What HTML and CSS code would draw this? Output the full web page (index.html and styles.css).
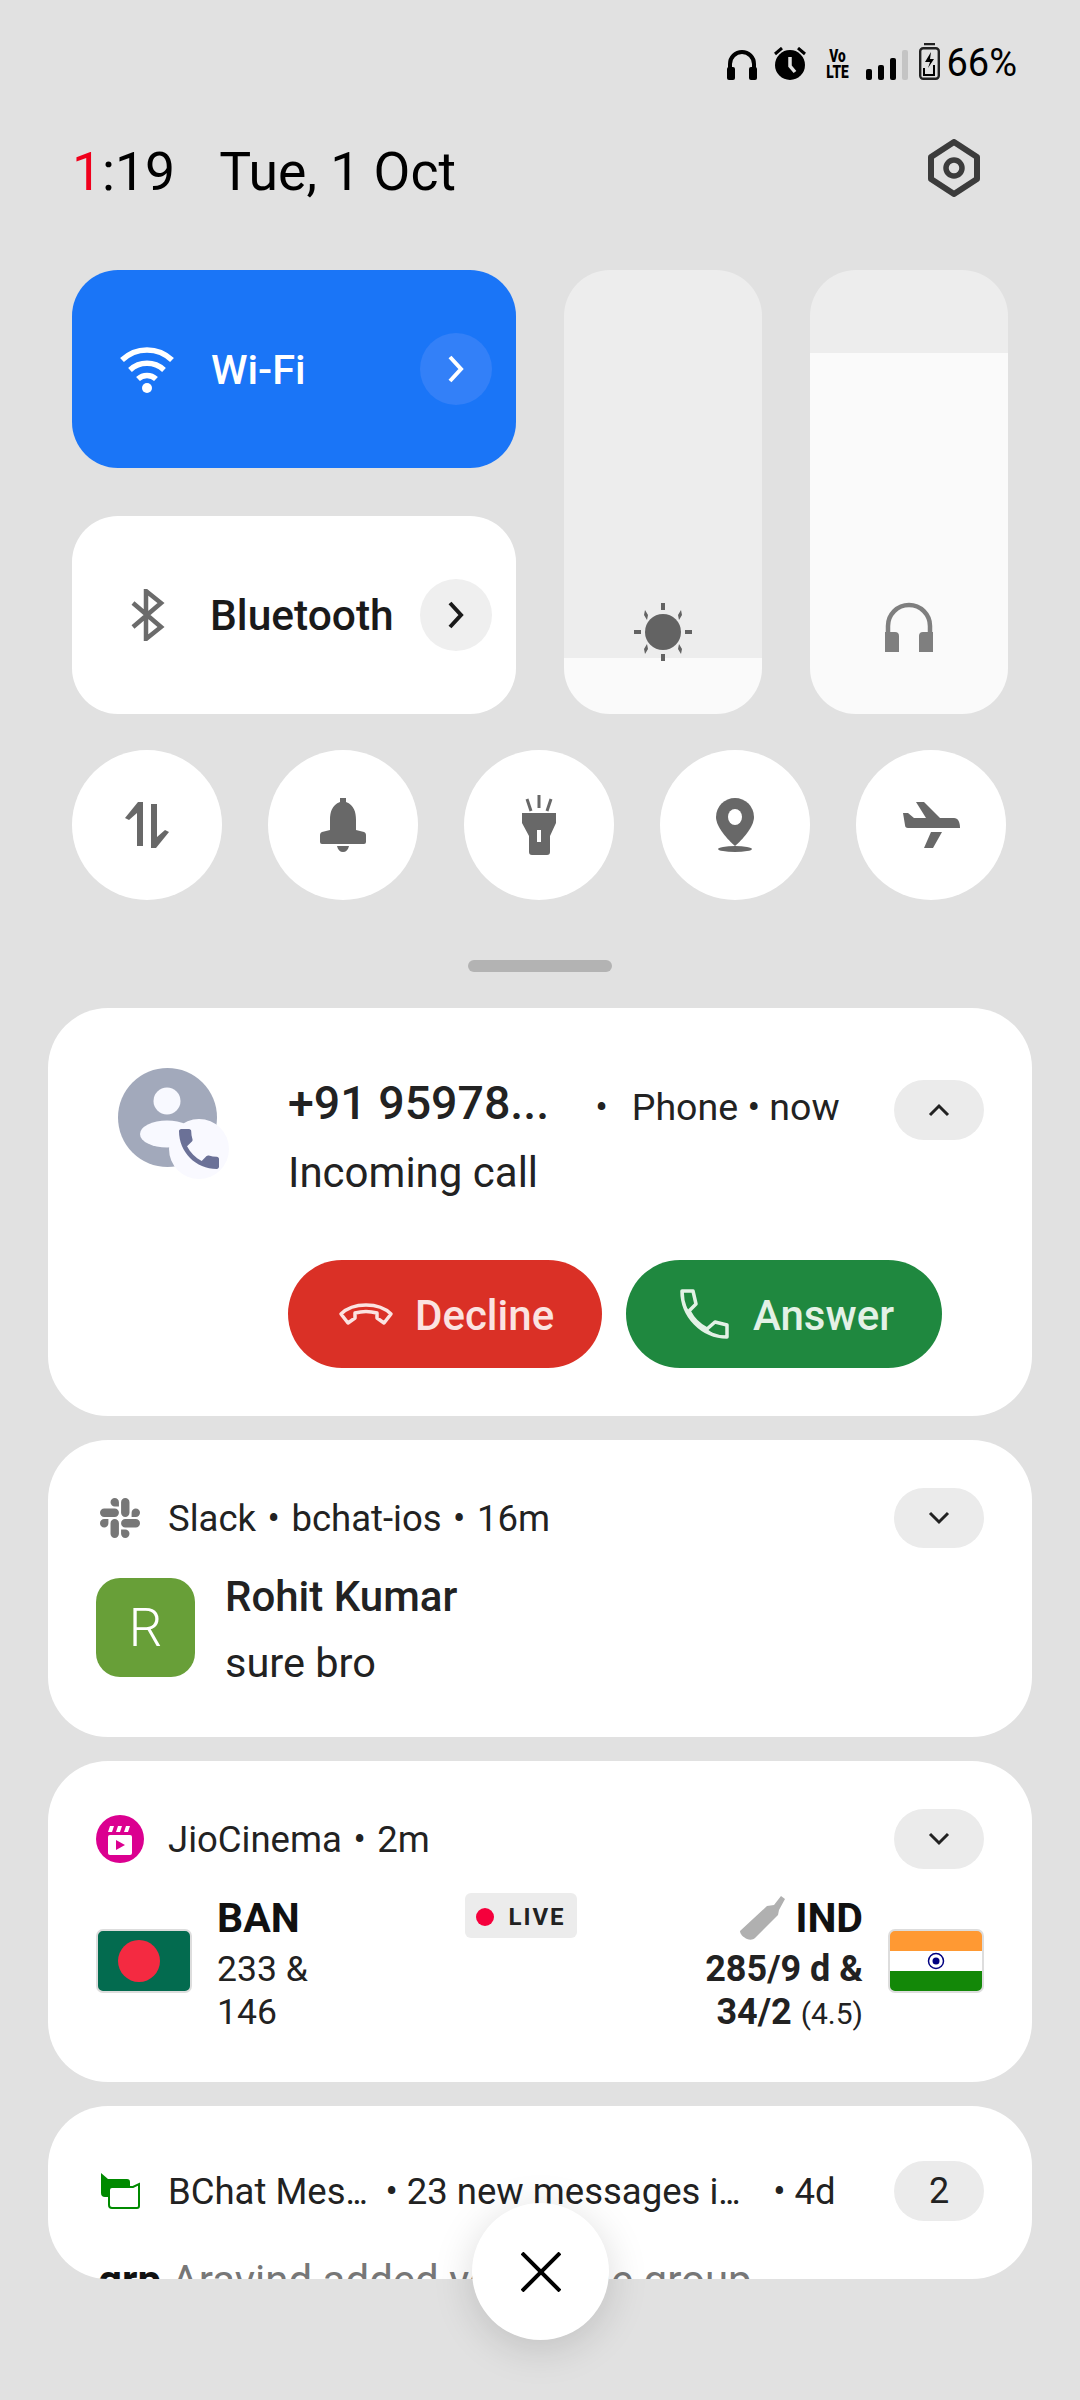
FILE: index.html
```html
<!DOCTYPE html>
<html lang="en">
<head>
    <meta charset="UTF-8">
    <meta name="viewport" content="width=device-width, initial-scale=1.0">
    <title>Notification shade</title>
    <link rel="stylesheet" href="styles.css">
</head>
<body>
    <header class="status">
        <svg width="30" height="30" viewBox="0 0 30 30"><path d="M3 27V14a12 12 0 0 1 24 0v13" fill="none" stroke="#000" stroke-width="4"/><rect x="0" y="17" width="8" height="13" rx="2"/><rect x="22" y="17" width="8" height="13" rx="2"/></svg>
        <svg class="status-alarm" width="32" height="33" viewBox="0 0 32 33"><circle cx="16" cy="18" r="15"/><path d="M16 10v9l5 6" fill="none" stroke="#e1e1e1" stroke-width="3.5"/><path d="M1 7l7-6M31 7l-7-6" stroke="#000" stroke-width="3"/></svg>
        <div class="volte"><span>Vo</span><span>LTE</span></div>
        <div class="signal"><i class="bar-1"></i><i class="bar-2"></i><i class="bar-3"></i><i class="bar-4"></i></div>
        <svg class="status-battery" width="21" height="37" viewBox="0 0 21 37"><path d="M5 1h11" stroke="#222" stroke-width="2.5"/><rect x="1.2" y="5.2" width="18.6" height="30.6" rx="3" fill="none" stroke="#222" stroke-width="2.4"/><path d="M12 9l-6 10h5l-2 6 6-9h-4z"/><path d="M5 25v7h10V22" fill="none" stroke="#000" stroke-width="2"/></svg>
        <span class="battery-text">66%</span>
    </header>

    <div class="clock-row">
        <div class="clock"><span class="clock-red">1</span>:19<span class="clock-date">Tue, 1 Oct</span></div>
        <svg width="52" height="58" viewBox="0 0 52 58"><path d="M26 3L49 18V40L26 55L3 40V18Z" fill="none" stroke="#3c3c3c" stroke-width="6" stroke-linejoin="round"/><circle cx="26" cy="29" r="8" fill="none" stroke="#3c3c3c" stroke-width="5.5"/></svg>
    </div>

    <section class="tiles">
        <div class="tile tile-wifi">
            <svg class="tile-icon" width="56" height="48" viewBox="0 0 56 48"><path d="M3 15a36 36 0 0 1 50 0" fill="none" stroke="#fff" stroke-width="5.5"/><path d="M11 25a25 25 0 0 1 34 0" fill="none" stroke="#fff" stroke-width="5.5"/><path d="M19 34a13 13 0 0 1 18 0" fill="none" stroke="#fff" stroke-width="5.5"/><circle cx="28" cy="43" r="5" fill="#fff"/></svg>
            <span class="tile-label">Wi-Fi</span>
            <span class="tile-more more-blue"><svg width="18" height="28" viewBox="0 0 18 28"><path d="M3 2l11 12L3 26" fill="none" stroke="#fff" stroke-width="4"/></svg></span>
        </div>
        <div class="slider slider-bright">
            <svg class="slider-icon icon-sun" width="58" height="58" viewBox="0 0 58 58"><circle cx="29" cy="29" r="18" fill="#636363"/><path d="M29 0v7M29 51v7M0 29h7M51 29h7" stroke="#636363" stroke-width="4"/><path d="M11 7l3 5-1 5-3-5zM47 7l-3 5 1 5 3-5zM11 51l3-5-1-5-3 5zM47 51l-3-5 1-5 3 5z" fill="#636363"/></svg>
        </div>
        <div class="slider slider-sound">
            <svg class="slider-icon icon-phones" width="48" height="50" viewBox="0 0 48 50"><path d="M3 38V24a21 21 0 0 1 42 0v14" fill="none" stroke="#7f7f7f" stroke-width="4.5"/><path d="M0 50V30h10a4 4 0 0 1 4 4v16zM48 50V30H38a4 4 0 0 0-4 4v16z" fill="#7f7f7f"/></svg>
        </div>
        <div class="tile tile-bt">
            <svg class="tile-icon" width="36" height="52" viewBox="0 0 36 52"><path d="M3 14l28 24L16 50V2l15 12L3 38" fill="none" stroke="#6b6b6b" stroke-width="4.5"/></svg>
            <span class="tile-label label-dark">Bluetooth</span>
            <span class="tile-more more-grey"><svg width="18" height="28" viewBox="0 0 18 28"><path d="M3 2l11 12L3 26" fill="none" stroke="#1a1a1a" stroke-width="4"/></svg></span>
        </div>
    </section>

    <section class="rounds">
        <div class="round"><svg width="44" height="46" viewBox="0 0 44 46"><path d="M0 16L13 0h5v44h-6V11L4 18zM44 30L31 46h-5V2h6v33l8-7z" fill="#686868"/></svg></div>
        <div class="round"><svg width="46" height="54" viewBox="0 0 46 54"><path d="M20 0h6v4c8 3 10 10 10 18v10l8 2c2 1 2 2 2 4v6a2 2 0 0 1-2 2H2a2 2 0 0 1-2-2v-6c0-2 0-3 2-4l8-2V22c0-8 2-15 10-18z" fill="#686868"/><path d="M17 48h12c-1 4-3 6-6 6s-5-2-6-6z" fill="#686868"/></svg></div>
        <div class="round"><svg width="34" height="60" viewBox="0 0 34 60"><path d="M5 4l4 12M17 0v13M29 4l-4 12" stroke="#686868" stroke-width="3"/><path d="M0 18h34v10l-6 13v16a3 3 0 0 1-3 3H10a3 3 0 0 1-3-3V41L0 28z" fill="#686868"/><rect x="15" y="35" width="4" height="12" fill="#fff"/></svg></div>
        <div class="round"><svg width="40" height="54" viewBox="0 0 40 54"><path d="M20 0a19 19 0 0 1 19 19c0 10-12 23-19 29C13 42 1 29 1 19A19 19 0 0 1 20 0z" fill="#686868"/><ellipse cx="20" cy="19" rx="7" ry="8" fill="#fff"/><ellipse cx="20" cy="51" rx="17" ry="3" fill="#686868"/></svg></div>
        <div class="round"><svg width="58" height="46" viewBox="0 0 58 46"><path d="M14 0h8l16 16h14c4 0 6 4 6 10H6c-2 0-3-1-3-3L1 11h5l6 5h12z" fill="#686868"/><path d="M29 30h11l-9 16h-9z" fill="#686868"/></svg></div>
    </section>

    <div class="handle"></div>

    <main class="cards">
        <article class="card card-call">
            <div class="call-row">
                <div class="avatar-call">
                    <svg width="99" height="99" viewBox="0 0 99 99"><circle cx="49.5" cy="49.5" r="49.5" fill="#a2a9bb"/><circle cx="49" cy="33" r="13.5" fill="#f8f9ff"/><ellipse cx="49" cy="66" rx="27" ry="13.5" fill="#f8f9ff"/></svg>
                    <span class="call-badge"><svg width="40" height="40" viewBox="3 3 18 18"><path fill="#6b7197" d="M6.62 10.79c1.44 2.83 3.76 5.14 6.59 6.59l2.2-2.2c.27-.27.67-.36 1.02-.24 1.12.37 2.33.57 3.57.57.55 0 1 .45 1 1V20c0 .55-.45 1-1 1-9.39 0-17-7.61-17-17 0-.55.45-1 1-1h3.5c.55 0 1 .45 1 1 0 1.25.2 2.45.57 3.57.11.35.03.74-.25 1.02l-2.2 2.2z"/></svg></span>
                </div>
                <div class="call-body">
                    <div class="call-top">
                        <span class="call-number">+91 95978...</span>
                        <span class="call-dot">•</span>
                        <span class="call-meta">Phone • now</span>
                        <span class="pill"><svg width="22" height="14" viewBox="0 0 22 14"><path d="M2 12l9-9 9 9" fill="none" stroke="#222" stroke-width="3"/></svg></span>
                    </div>
                    <div class="call-sub">Incoming call</div>
                </div>
            </div>
            <div class="call-actions">
                <div class="btn btn-decline">
                    <svg width="56" height="24" viewBox="0 0 56 24"><path d="M10 21L3 12C15 0 41 0 53 12l-7 9-7-5v-5c-7-2-15-2-22 0v5z" fill="none" stroke="#fbe3e1" stroke-width="3.5" stroke-linejoin="round"/></svg>
                    <span>Decline</span>
                </div>
                <div class="btn btn-answer">
                    <svg width="52" height="52" viewBox="0 0 52 52"><path d="M4 3h11l3 13-7 7c4 8 10 14 18 18l8-7 12 3v12C24 49 4 28 4 3z" fill="none" stroke="#e3f1e6" stroke-width="3.5" stroke-linejoin="round"/><path d="M6 15c3 15 14 26 30 31L29 41c-8-4-14-10-18-18z" fill="#e3f1e6"/></svg>
                    <span>Answer</span>
                </div>
            </div>
        </article>

        <article class="card card-slack">
            <div class="card-head">
                <span class="app-icon"><svg width="40" height="40" viewBox="0 0 24 24"><path fill="#777" d="M5.042 15.165a2.528 2.528 0 0 1-2.52 2.523A2.528 2.528 0 0 1 0 15.165a2.527 2.527 0 0 1 2.522-2.52h2.52v2.52zM6.313 15.165a2.527 2.527 0 0 1 2.521-2.52 2.527 2.527 0 0 1 2.521 2.52v6.313A2.528 2.528 0 0 1 8.834 24a2.528 2.528 0 0 1-2.521-2.522v-6.313zM8.834 5.042a2.528 2.528 0 0 1-2.521-2.52A2.528 2.528 0 0 1 8.834 0a2.528 2.528 0 0 1 2.521 2.522v2.52H8.834zM8.834 6.313a2.528 2.528 0 0 1 2.521 2.521 2.528 2.528 0 0 1-2.521 2.521H2.522A2.528 2.528 0 0 1 0 8.834a2.528 2.528 0 0 1 2.522-2.521h6.312zM18.956 8.834a2.528 2.528 0 0 1 2.522-2.521A2.528 2.528 0 0 1 24 8.834a2.528 2.528 0 0 1-2.522 2.521h-2.522V8.834zM17.688 8.834a2.528 2.528 0 0 1-2.523 2.521 2.527 2.527 0 0 1-2.52-2.521V2.522A2.527 2.527 0 0 1 15.165 0a2.528 2.528 0 0 1 2.523 2.522v6.312zM15.165 18.956a2.528 2.528 0 0 1 2.523 2.522A2.528 2.528 0 0 1 15.165 24a2.527 2.527 0 0 1-2.52-2.522v-2.522h2.52zM15.165 17.688a2.527 2.527 0 0 1-2.52-2.523 2.526 2.526 0 0 1 2.52-2.52h6.313A2.527 2.527 0 0 1 24 15.165a2.528 2.528 0 0 1-2.522 2.523h-6.313z"/></svg></span>
                <span class="head-text">Slack • bchat-ios • 16m</span>
                <span class="pill"><svg width="22" height="14" viewBox="0 0 22 14"><path d="M2 2l9 9 9-9" fill="none" stroke="#222" stroke-width="3"/></svg></span>
            </div>
            <div class="msg-row">
                <div class="msg-avatar">R</div>
                <div class="msg-body">
                    <div class="msg-name">Rohit Kumar</div>
                    <div class="msg-text">sure bro</div>
                </div>
            </div>
        </article>

        <article class="card card-score">
            <div class="card-head">
                <span class="app-icon"><svg width="48" height="48" viewBox="0 0 48 48"><circle cx="24" cy="24" r="24" fill="#db0090"/><rect x="12" y="20" width="24" height="20" rx="2" fill="#fff"/><path d="M12 17l2-6h4l-2 6zM20 17l2-6h4l-2 6zM28 17l2-6h4l-2 6z" fill="#fff"/><path d="M20 25l9 5-9 5z" fill="#db0090"/></svg></span>
                <span class="head-text">JioCinema • 2m</span>
                <span class="pill"><svg width="22" height="14" viewBox="0 0 22 14"><path d="M2 2l9 9 9-9" fill="none" stroke="#222" stroke-width="3"/></svg></span>
            </div>
            <div class="score-grid">
                <div class="team">
                    <svg class="flag" width="96" height="64" viewBox="0 0 96 64"><rect x="1" y="1" width="94" height="62" rx="6" fill="#036b4f" stroke="#ddd" stroke-width="2"/><circle cx="43" cy="32" r="21" fill="#f42a41"/></svg>
                    <div>
                        <div class="team-name">BAN</div>
                        <div class="team-score">233 &amp;<br>146</div>
                    </div>
                </div>
                <div class="live"><i class="live-dot"></i>LIVE</div>
                <div class="team team-right">
                    <div>
                        <div class="team-name">
                            <svg class="bat" width="46" height="44" viewBox="0 0 46 44"><path d="M42 0l4 3-6 11-1 5-23 23c-2 2-5 2-8 1-4-2-7-5-7-8L28 10l7-1z" fill="#b0b0b0"/></svg>
                            IND
                        </div>
                        <div class="team-score score-strong">285/9 d &amp;<br>34/2 <small>(4.5)</small></div>
                    </div>
                    <svg class="flag" width="96" height="64" viewBox="0 0 96 64"><clipPath id="ind-clip"><rect x="1" y="1" width="94" height="62" rx="6"/></clipPath><g clip-path="url(#ind-clip)"><rect width="96" height="22" fill="#ff9933"/><rect y="22" width="96" height="20" fill="#fff"/><rect y="42" width="96" height="22" fill="#138808"/></g><rect x="1" y="1" width="94" height="62" rx="6" fill="none" stroke="#ddd" stroke-width="2"/><circle cx="48" cy="32" r="7.5" fill="none" stroke="#000080" stroke-width="1.5"/><circle cx="48" cy="32" r="3.5" fill="#000080"/></svg>
                </div>
            </div>
        </article>

        <article class="card card-chat">
            <div class="card-head">
                <span class="app-icon"><svg width="40" height="36" viewBox="0 0 40 36"><path d="M1 0l7 6h19a3 3 0 0 1 3 3v15H5a4 4 0 0 1-4-4z" fill="#008a00"/><path d="M39 11v22a2 2 0 0 1-2 2H12a3 3 0 0 1-3-3V17a3 3 0 0 1 3-3h21z" fill="#fff" stroke="#008a00" stroke-width="2"/></svg></span>
                <span class="head-text">BChat Mes<span class="dots">...</span></span>
                <span class="head-text head-gap">• 23 new messages i<span class="dots">...</span></span>
                <span class="head-text head-gap-2">• 4d</span>
                <span class="pill pill-count">2</span>
            </div>
            <div class="chat-line"><b>grp</b> Aravind added you to the group</div>
        </article>
    </main>

    <div class="close-btn"><svg width="40" height="40" viewBox="0 0 40 40"><path d="M1 1l38 38M39 1L1 39" stroke="#000" stroke-width="4"/></svg></div>
</body>
</html>
```

FILE: styles.css
```css
* {
    margin: 0;
    padding: 0;
    box-sizing: border-box;
}

body {
    position: relative;
    width: 1080px;
    height: 2400px;
    overflow: hidden;
    background-color: #e1e1e1;
    color: #222;
    font-family: Roboto, sans-serif;
}

svg {
    display: block;
    flex-shrink: 0;
}

/* status bar */
.status {
    display: flex;
    justify-content: flex-end;
    align-items: flex-end;
    height: 80px;
    padding-right: 63px;
    color: #000;
}
.status-alarm {
    margin-left: 17px;
}
.volte {
    display: flex;
    flex-direction: column;
    margin-left: 16px;
    font-size: 19px;
    line-height: 16px;
    font-weight: 900;
    text-align: center;
    transform: scaleX(0.72);
}
.signal {
    display: flex;
    align-items: flex-end;
    gap: 6px;
    height: 30px;
    margin-left: 13px;
}
.signal i {
    display: block;
    width: 6px;
    border-radius: 2px;
    background-color: #000;
}
.signal .bar-1 { height: 11px; }
.signal .bar-2 { height: 15px; }
.signal .bar-3 { height: 22px; }
.signal .bar-4 { height: 30px; background-color: #c4c4c4; }
.status-battery {
    margin-left: 11px;
}
.battery-text {
    margin-left: 6px;
    font-size: 38px;
    line-height: 34px;
}

/* clock */
.clock-row {
    display: flex;
    justify-content: space-between;
    align-items: center;
    height: 58px;
    margin-top: 59px;
    padding: 0 100px 0 72px;
}
.clock {
    padding-top: 6px;
    font-size: 53.5px;
    color: #000;
}
.clock-red {
    color: #f0001c;
}
.clock-date {
    margin-left: 44px;
}

/* tiles */
.tiles {
    display: grid;
    grid-template-columns: 444px 198px 198px;
    grid-template-rows: 198px 198px;
    gap: 48px;
    margin-top: 73px;
    padding-left: 72px;
}
.tile {
    display: flex;
    align-items: center;
    border-radius: 46px;
    padding: 0 24px 0 47px;
}
.tile-wifi {
    background-color: #1a75f7;
}
.tile-bt {
    background-color: #fff;
    padding-left: 58px;
}
.tile-icon {
    flex-shrink: 0;
}
.tile-label {
    margin-left: 36px;
    font-size: 41.5px;
    font-weight: 500;
    color: #fff;
}
.label-dark {
    margin-left: 44px;
    font-size: 42.5px;
    color: #1a1a1a;
}
.tile-more {
    display: flex;
    justify-content: center;
    align-items: center;
    width: 72px;
    height: 72px;
    margin-left: auto;
    border-radius: 50%;
}
.more-blue { background-color: #3380f8; }
.more-grey { background-color: #efefef; }

.slider {
    display: flex;
    justify-content: center;
    grid-row: 1 / 3;
    border-radius: 46px;
}
.slider-bright {
    grid-column: 2;
    background: linear-gradient(to bottom, #ededed 388px, #fafafa 388px);
}
.slider-sound {
    grid-column: 3;
    background: linear-gradient(to bottom, #ededed 83px, #fafafa 83px);
}
.icon-sun { margin-top: 333px; }
.icon-phones { margin-top: 332px; }

/* round toggles */
.rounds {
    display: flex;
    gap: 46px;
    margin-top: 36px;
    padding-left: 72px;
}
.round {
    display: flex;
    justify-content: center;
    align-items: center;
    width: 150px;
    height: 150px;
    border-radius: 50%;
    background-color: #fff;
}

.handle {
    width: 144px;
    height: 12px;
    margin: 60px auto 0;
    border-radius: 6px;
    background-color: #b3b3b3;
}

/* notifications */
.cards {
    display: flex;
    flex-direction: column;
    gap: 24px;
    margin: 36px 48px 0;
}
.card {
    border-radius: 60px;
    background-color: #fff;
    overflow: hidden;
}
.card-call { height: 408px; }
.card-slack { height: 297px; padding: 48px 48px 0; }
.card-score { height: 321px; padding: 48px 48px 0; }
.card-chat { height: 173px; padding: 55px 48px 0; }

.pill {
    display: flex;
    justify-content: center;
    align-items: center;
    width: 90px;
    height: 60px;
    margin-left: auto;
    border-radius: 30px;
    background-color: #ebebeb;
    flex-shrink: 0;
}
.pill-count {
    font-size: 36px;
}

.call-row {
    display: flex;
    padding: 60px 48px 0 70px;
}
.avatar-call {
    position: relative;
    width: 99px;
    height: 99px;
    flex-shrink: 0;
}
.call-badge {
    position: absolute;
    left: 51px;
    top: 51px;
    display: flex;
    justify-content: center;
    align-items: center;
    width: 60px;
    height: 60px;
    border-radius: 50%;
    background-color: #f9f9ff;
}
.call-body {
    flex: 1;
    margin-left: 71px;
    padding-top: 12px;
}
.call-top {
    display: flex;
    align-items: center;
    height: 60px;
}
.call-number {
    padding-bottom: 14px;
    font-size: 46.5px;
    font-weight: 500;
}
.call-dot {
    margin-left: 46px;
    padding-bottom: 6px;
    font-size: 37.5px;
}
.call-meta {
    margin-left: 24px;
    padding-bottom: 6px;
    font-size: 37.5px;
}
.call-sub {
    margin-top: 9px;
    font-size: 42px;
    line-height: 48px;
}
.call-actions {
    display: flex;
    gap: 24px;
    margin-top: 63px;
    margin-left: 240px;
}
.btn {
    display: flex;
    align-items: center;
    height: 108px;
    border-radius: 54px;
    font-size: 42px;
    font-weight: 500;
}
.btn span {
    padding-top: 3px;
}
.btn-decline {
    width: 314px;
    gap: 21px;
    padding-left: 50px;
    background-color: #da3026;
    color: #fbe3e1;
}
.btn-answer {
    width: 316px;
    gap: 23px;
    padding-left: 52px;
    background-color: #1f883f;
    color: #e3f1e6;
}

.card-head {
    display: flex;
    align-items: center;
    height: 60px;
}
.app-icon {
    display: flex;
    justify-content: center;
    width: 48px;
    flex-shrink: 0;
}
.head-text {
    margin-left: 24px;
    font-size: 36.5px;
    word-spacing: 2.5px;
    white-space: nowrap;
}
.card-chat .head-text {
    word-spacing: 0;
}
.card-chat .head-gap { margin-left: 20px; }
.card-chat .head-gap-2 { margin-left: 35px; }
.dots {
    letter-spacing: -3px;
}

.msg-row {
    display: flex;
    gap: 30px;
    margin-top: 30px;
}
.msg-avatar {
    display: flex;
    justify-content: center;
    align-items: center;
    width: 99px;
    height: 99px;
    border-radius: 24px;
    background-color: #689f38;
    color: #fff;
    font-size: 53px;
    font-weight: 300;
}
.msg-body {
    margin-top: -5px;
}
.msg-name {
    font-size: 42px;
    font-weight: 500;
    line-height: 48px;
    margin-bottom: 18px;
}
.msg-text {
    font-size: 41.5px;
    line-height: 48px;
}

.score-grid {
    display: grid;
    grid-template-columns: 369px 112px 1fr;
    margin-top: 24px;
}
.team {
    display: flex;
    gap: 25px;
}
.team-right {
    justify-content: flex-end;
    text-align: right;
    gap: 25px;
}
.flag {
    margin-top: 36px;
}
.team-name {
    display: flex;
    align-items: center;
    gap: 10px;
    height: 50px;
    margin-bottom: 5px;
    font-size: 41px;
    font-weight: 700;
    color: #111;
}
.team-right .team-name {
    justify-content: flex-end;
}
.team-score {
    font-size: 35.5px;
    line-height: 43px;
}
.score-strong {
    font-size: 36px;
    font-weight: 700;
}
.score-strong small {
    font-size: 30px;
    font-weight: 400;
}
.live {
    display: flex;
    justify-content: center;
    align-items: center;
    gap: 14px;
    height: 45px;
    padding-top: 2px;
    border-radius: 6px;
    background-color: #ececec;
    font-size: 24px;
    font-weight: 700;
    letter-spacing: 2px;
}
.live-dot {
    width: 18px;
    height: 18px;
    border-radius: 50%;
    background-color: #f5003c;
}

.chat-line {
    margin-top: 36px;
    margin-left: 2px;
    font-size: 42px;
    line-height: 48px;
    color: #777;
    white-space: nowrap;
}
.chat-line b {
    color: #111;
}

.close-btn {
    position: absolute;
    left: 472px;
    top: 2203px;
    display: flex;
    justify-content: center;
    align-items: center;
    width: 137px;
    height: 137px;
    border-radius: 50%;
    background-color: #fff;
    box-shadow: 0 8px 40px rgba(0, 0, 0, 0.15);
}
```
